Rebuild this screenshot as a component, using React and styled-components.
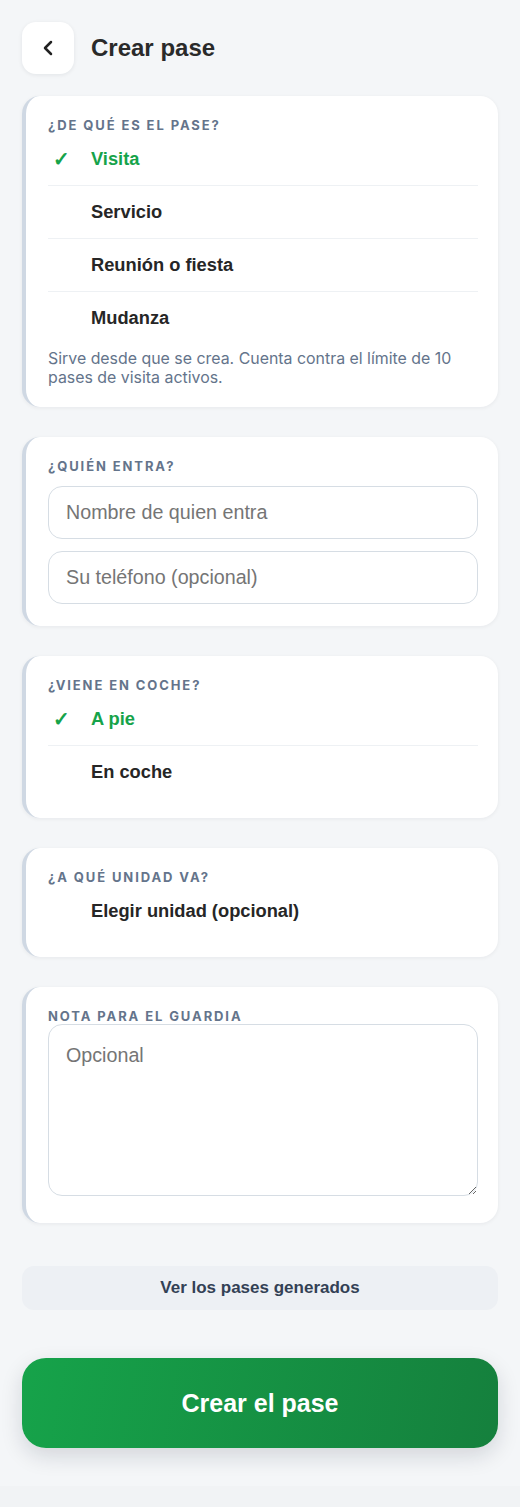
import React, { useState } from "react";
import styled, { createGlobalStyle } from "styled-components";
import { ChevronLeft } from "lucide-react";

const GlobalStyle = createGlobalStyle`
  * { box-sizing: border-box; }
  body {
    margin: 0;
    background: #f4f6f8;
    font-family: "Liberation Sans", Arial, sans-serif;
    color: #222;
  }
`;

const TIPOS = ["Visita", "Servicio", "Reunión o fiesta", "Mudanza"];
const TRANSPORTE = ["A pie", "En coche"];

export default function App() {
  const [tipo, setTipo] = useState("Visita");
  const [transporte, setTransporte] = useState("A pie");

  return (
    <>
      <GlobalStyle />
      <Page>
        <Header>
          <BackButton aria-label="Volver">
            <ChevronLeft size={24} strokeWidth={2.5} />
          </BackButton>
          <Title>Crear pase</Title>
        </Header>

        <Card>
          <Label>¿De qué es el pase?</Label>
          <Options>
            {TIPOS.map((t) => (
              <Option key={t} $active={tipo === t} onClick={() => setTipo(t)}>
                <Check>{tipo === t ? "✓" : ""}</Check>
                {t}
              </Option>
            ))}
          </Options>
          <Hint>
            Sirve desde que se crea. Cuenta contra el límite de 10 pases de
            visita activos.
          </Hint>
        </Card>

        <Card>
          <Label>¿Quién entra?</Label>
          <Fields>
            <Input placeholder="Nombre de quien entra" />
            <Input placeholder="Su teléfono (opcional)" />
          </Fields>
        </Card>

        <Card>
          <Label>¿Viene en coche?</Label>
          <Options>
            {TRANSPORTE.map((t) => (
              <Option
                key={t}
                $active={transporte === t}
                onClick={() => setTransporte(t)}
              >
                <Check>{transporte === t ? "✓" : ""}</Check>
                {t}
              </Option>
            ))}
          </Options>
        </Card>

        <Card>
          <Label>¿A qué unidad va?</Label>
          <Options>
            <Option>
              <Check />
              Elegir unidad (opcional)
            </Option>
          </Options>
        </Card>

        <Card $tight>
          <Label>Nota para el guardia</Label>
          <TextArea placeholder="Opcional" />
        </Card>

        <SecondaryButton>Ver los pases generados</SecondaryButton>
      </Page>

      <Footer>
        <PrimaryButton>Crear el pase</PrimaryButton>
      </Footer>
    </>
  );
}

const Page = styled.main`
  padding: 22px 22px 0;
  display: flex;
  flex-direction: column;
  gap: 30px;
`;

const Header = styled.header`
  display: flex;
  align-items: center;
  gap: 17px;
  margin-bottom: -8px;
`;

const BackButton = styled.button`
  width: 52px;
  height: 52px;
  border: none;
  border-radius: 14px;
  background: #fff;
  color: #222;
  box-shadow: 0 1px 4px rgba(15, 23, 42, 0.08);
  display: flex;
  align-items: center;
  justify-content: center;
  padding: 0;
  cursor: pointer;
`;

const Title = styled.h1`
  margin: 0;
  font-size: 24px;
  font-weight: 700;
  color: #2a2a2a;
`;

const Card = styled.section`
  background: #fff;
  border-radius: 18px;
  border-left: 4px solid #cfd8e3;
  box-shadow: 0 1px 4px rgba(15, 23, 42, 0.06);
  padding: 21px 20px ${(p) => (p.$tight ? "27px" : "20px")} 22px;
`;

const Label = styled.div`
  font-family: Inter, "Liberation Sans", sans-serif;
  font-size: 13px;
  line-height: 16px;
  font-weight: 700;
  letter-spacing: 1.9px;
  text-transform: uppercase;
  color: #64748b;
`;

const Options = styled.div`
  display: flex;
  flex-direction: column;
`;

const Option = styled.div`
  display: flex;
  align-items: center;
  height: 52px;
  font-size: 18.3px;
  font-weight: 700;
  color: ${(p) => (p.$active ? "#16a34a" : "#262626")};
  cursor: pointer;

  & + & {
    border-top: 1px solid #eef1f4;
    height: 53px;
  }
`;

const Check = styled.span`
  width: 43px;
  padding-left: 5px;
  font-size: 20px;
  color: #16a34a;
`;

const Hint = styled.p`
  margin: 5px 0 0;
  font-family: Inter, "Liberation Sans", sans-serif;
  font-size: 15.9px;
  line-height: 19px;
  color: #64748b;
`;

const Fields = styled.div`
  display: flex;
  flex-direction: column;
  gap: 12px;
  margin-top: 12px;
  padding-bottom: 2px;
`;

const Input = styled.input`
  width: 100%;
  height: 53px;
  border: 1px solid #d6dde4;
  border-radius: 14px;
  padding: 0 17px;
  font-family: "Liberation Sans", Arial, sans-serif;
  font-size: 19.7px;
  color: #222;
  background: #fff;
  outline: none;

  &::placeholder {
    color: #757575;
  }
`;

const TextArea = styled.textarea`
  display: block;
  width: 100%;
  height: 172px;
  border: 1px solid #d6dde4;
  border-radius: 14px;
  padding: 19px 17px;
  font-family: "Liberation Sans", Arial, sans-serif;
  font-size: 19.7px;
  line-height: 22px;
  color: #222;
  background: #fff;
  outline: none;

  &::placeholder {
    color: #757575;
  }
`;

const SecondaryButton = styled.button`
  margin-top: 13px;
  height: 44px;
  border: none;
  border-radius: 12px;
  background: #edf0f4;
  font-family: "Liberation Sans", Arial, sans-serif;
  font-size: 17px;
  font-weight: 700;
  color: #334155;
  cursor: pointer;
`;

const Footer = styled.footer`
  padding: 48px 22px 38px;
  border-bottom: 21px solid #f1f3f5;
`;

const PrimaryButton = styled.button`
  width: 100%;
  height: 90px;
  border: none;
  border-radius: 24px;
  background: linear-gradient(100deg, #16a34a 0%, #15803d 100%);
  box-shadow: 0 8px 22px rgba(15, 23, 42, 0.14);
  font-family: "Liberation Sans", Arial, sans-serif;
  font-size: 25px;
  font-weight: 700;
  color: #fff;
  cursor: pointer;
`;
